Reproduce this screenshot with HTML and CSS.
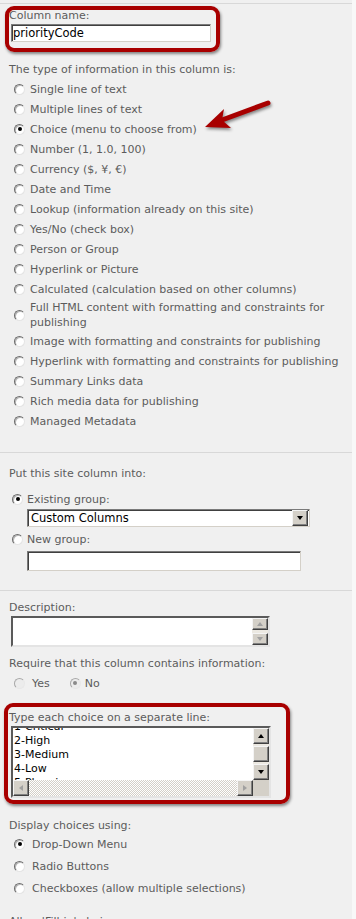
FILE: index.html
```html
<!DOCTYPE html>
<html lang="en">
<head>
    <meta charset="UTF-8">
    <meta name="viewport" content="width=device-width, initial-scale=1.0">
    <title>Create Column</title>
    <link rel="stylesheet" href="styles.css">
</head>
<body>
    <div class="page">
        <div class="section section-name">
            <div class="field callout callout-name">
                <div class="label">Column name:</div>
                <input type="text" class="textbox name-box" value="priorityCode">
            </div>
            <div class="label type-label">The type of information in this column is:</div>
            <div class="options">
                <div class="option"><span class="radio"></span><span class="text">Single line of text</span></div>
                <div class="option"><span class="radio"></span><span class="text">Multiple lines of text</span></div>
                <div class="option"><span class="radio checked"></span><span class="text">Choice (menu to choose from)</span></div>
                <div class="option"><span class="radio"></span><span class="text">Number (1, 1.0, 100)</span></div>
                <div class="option"><span class="radio"></span><span class="text">Currency ($, ¥, €)</span></div>
                <div class="option"><span class="radio"></span><span class="text">Date and Time</span></div>
                <div class="option"><span class="radio"></span><span class="text">Lookup (information already on this site)</span></div>
                <div class="option"><span class="radio"></span><span class="text">Yes/No (check box)</span></div>
                <div class="option"><span class="radio"></span><span class="text">Person or Group</span></div>
                <div class="option"><span class="radio"></span><span class="text">Hyperlink or Picture</span></div>
                <div class="option"><span class="radio"></span><span class="text">Calculated (calculation based on other columns)</span></div>
                <div class="option"><span class="radio"></span><span class="text">Full HTML content with formatting and constraints for publishing</span></div>
                <div class="option"><span class="radio"></span><span class="text">Image with formatting and constraints for publishing</span></div>
                <div class="option"><span class="radio"></span><span class="text">Hyperlink with formatting and constraints for publishing</span></div>
                <div class="option"><span class="radio"></span><span class="text">Summary Links data</span></div>
                <div class="option"><span class="radio"></span><span class="text">Rich media data for publishing</span></div>
                <div class="option"><span class="radio"></span><span class="text">Managed Metadata</span></div>
            </div>
        </div>

        <div class="section section-group">
            <div class="label">Put this site column into:</div>
            <div class="option group-option first"><span class="radio checked"></span><span class="text">Existing group:</span></div>
            <div class="select">
                <span class="select-value">Custom Columns</span>
                <span class="sb-btn select-btn"><span class="tri tri-down"></span></span>
            </div>
            <div class="option group-option"><span class="radio"></span><span class="text">New group:</span></div>
            <input type="text" class="textbox group-box" value="">
        </div>

        <div class="section section-more">
            <div class="label">Description:</div>
            <div class="memo desc-memo">
                <div class="memo-text"></div>
                <div class="vscroll">
                    <span class="sb-btn"><span class="tri tri-up dim"></span></span>
                    <span class="sb-track"></span>
                    <span class="sb-btn"><span class="tri tri-down dim"></span></span>
                </div>
            </div>

            <div class="label require-label">Require that this column contains information:</div>
            <div class="yes-no">
                <span class="radio disabled"></span><span class="text yes-text">Yes</span>
                <span class="radio disabled checked"></span><span class="text">No</span>
            </div>

            <div class="field callout callout-choices">
                <div class="label">Type each choice on a separate line:</div>
                <div class="memo choice-memo">
                    <div class="memo-main">
                        <div class="memo-text">
                            <div class="memo-lines">1-Critical<br>2-High<br>3-Medium<br>4-Low<br>5-Planning</div>
                        </div>
                        <div class="vscroll">
                            <span class="sb-btn"><span class="tri tri-up"></span></span>
                            <span class="sb-gap"></span>
                            <span class="sb-btn sb-thumb"></span>
                            <span class="sb-gap"></span>
                            <span class="sb-btn"><span class="tri tri-down"></span></span>
                        </div>
                    </div>
                    <div class="hscroll">
                        <span class="sb-btn"><span class="tri tri-left dim"></span></span>
                        <span class="sb-track"></span>
                        <span class="sb-btn"><span class="tri tri-right dim"></span></span>
                        <span class="sb-corner"></span>
                    </div>
                </div>
            </div>

            <div class="label display-label">Display choices using:</div>
            <div class="option display-option"><span class="radio checked"></span><span class="text">Drop-Down Menu</span></div>
            <div class="option display-option"><span class="radio"></span><span class="text">Radio Buttons</span></div>
            <div class="option display-option"><span class="radio"></span><span class="text">Checkboxes (allow multiple selections)</span></div>

            <div class="label fill-label">Allow 'Fill-in' choices:</div>
        </div>

        <!-- red pointer drawn over the Choice option -->
        <svg class="arrow" width="80" height="45" viewBox="0 0 80 45">
            <line x1="73" y1="8" x2="27" y2="25" stroke="#a80000" stroke-width="5" stroke-linecap="round"/>
            <polygon points="10,32 29,14 27,25 36,33" fill="#a80000"/>
        </svg>
    </div>
</body>
</html>
```

FILE: styles.css
```css
body {
    margin: 0;
    background: #f8f8f8;
    font-family: 'DejaVu Sans', Verdana, sans-serif;
    font-size: 11px;
    line-height: 15px;
    color: #5c5c5c;
}

.page {
    position: relative;
    width: 352px;
    height: 919px;
    box-sizing: border-box;
    padding-top: 3px;
    overflow: hidden;
    background: #f0f0f0;
}

.section {
    border-top: 1px solid #d8d8d8;
    padding-left: 9px;
}

.section-name {
    padding-top: 4px;
    padding-bottom: 21px;
}

.section-group {
    padding-top: 13px;
    padding-bottom: 19px;
}

.section-more {
    padding-top: 9px;
}

.label {
    white-space: nowrap;
}

.type-label {
    margin-top: 20px;
}

/* text boxes */
.textbox {
    display: block;
    box-sizing: border-box;
    height: 18px;
    margin: 1px 0 0 2px;
    padding: 0 1px;
    border: 1px solid;
    border-color: #7a7a7a #d4d0c8 #d4d0c8 #7a7a7a;
    box-shadow: inset 1px 1px 0 #404040;
    background: #fff;
    color: #000;
    font-family: 'DejaVu Sans', Verdana, sans-serif;
    font-size: 11.5px;
    outline: none;
}

.name-box {
    width: 200px;
}

.group-box {
    width: 274px;
    height: 20px;
    margin: 2px 0 0 18px;
}

/* radio options */
.options {
    margin-top: 2px;
}

.option {
    display: flex;
    align-items: center;
    min-height: 20px;
    padding-left: 5px;
    padding-right: 4px;
}

.option .text {
    padding: 1px 0;
    margin-left: 5px;
}

.radio {
    position: relative;
    flex: none;
    width: 11px;
    height: 11px;
    box-sizing: border-box;
    border-radius: 50%;
    border: 1px solid;
    border-color: #6c6c6c #e4e4e4 #e4e4e4 #6c6c6c;
    box-shadow: inset 1px 1px 0 #b8b8b8;
    background: #fff;
}

.radio.checked::after {
    content: '';
    position: absolute;
    left: 2.5px;
    top: 2.5px;
    width: 4px;
    height: 4px;
    border-radius: 50%;
    background: #000;
}

.radio.disabled {
    background: #ececec;
    border-color: #a8a8a8 #e8e8e8 #e8e8e8 #a8a8a8;
    box-shadow: none;
}

.radio.disabled.checked::after {
    background: #8a8a8a;
}

.group-option {
    padding-left: 3px;
    margin-top: 2px;
}

.group-option.first {
    margin-top: 8px;
}

.group-option .text {
    margin-left: 4px;
}

/* drop-down */
.select {
    display: flex;
    align-items: center;
    width: 283px;
    height: 18px;
    box-sizing: border-box;
    margin-left: 18px;
    padding: 1px 1px 1px 3px;
    border: 1px solid;
    border-color: #7a7a7a #d4d0c8 #d4d0c8 #7a7a7a;
    box-shadow: inset 1px 1px 0 #404040;
    background: #fff;
    color: #000;
    font-size: 11.5px;
}

.select-value {
    flex: 1;
}

.select-btn {
    width: 15px;
    height: 14px;
}

/* scrollbar parts */
.sb-btn {
    display: flex;
    align-items: center;
    justify-content: center;
    flex: none;
    box-sizing: border-box;
    width: 16px;
    height: 16px;
    background: #d4d0c8;
    border: 1px solid;
    border-color: #f4f4f4 #404040 #404040 #f4f4f4;
    box-shadow: inset -1px -1px 0 #808080;
}

.sb-track {
    flex: 1;
    background: repeating-conic-gradient(#fff 0 25%, #d4d0c8 0 50%) 0 0 / 2px 2px;
}

.sb-gap {
    height: 2px;
    background: #ece9e2;
}

.sb-corner {
    width: 16px;
    background: #d4d0c8;
}

.tri {
    width: 0;
    height: 0;
}

.tri-down {
    border-left: 3.5px solid transparent;
    border-right: 3.5px solid transparent;
    border-top: 4px solid #000;
}

.tri-up {
    border-left: 3.5px solid transparent;
    border-right: 3.5px solid transparent;
    border-bottom: 4px solid #000;
}

.tri-left {
    border-top: 3.5px solid transparent;
    border-bottom: 3.5px solid transparent;
    border-right: 4px solid #000;
}

.tri-right {
    border-top: 3.5px solid transparent;
    border-bottom: 3.5px solid transparent;
    border-left: 4px solid #000;
}

.tri-up.dim {
    border-bottom-color: #a0a0a0;
}

.tri-down.dim {
    border-top-color: #a0a0a0;
}

.tri-left.dim {
    border-right-color: #a0a0a0;
}

.tri-right.dim {
    border-left-color: #a0a0a0;
}

/* multi-line boxes */
.memo {
    box-sizing: border-box;
    margin: 1px 0 0 2px;
    border: 2px solid;
    border-color: #5a5a5a #e4e4e4 #e4e4e4 #5a5a5a;
    background: #fff;
    color: #000;
}

.desc-memo {
    display: flex;
    width: 259px;
    height: 31px;
}

.memo-text {
    flex: 1;
    overflow: hidden;
}

.vscroll {
    display: flex;
    flex-direction: column;
    width: 16px;
}

.desc-memo .sb-btn {
    height: 12px;
}

.desc-memo .sb-track {
    background: #ece9e2;
}

.choice-memo {
    display: flex;
    flex-direction: column;
    width: 260px;
    height: 72px;
}

.memo-main {
    display: flex;
    flex: 1;
    min-height: 0;
}

.memo-lines {
    margin-top: -8px;
    padding-left: 1px;
    font-size: 11px;
    line-height: 14px;
}

.hscroll {
    display: flex;
    height: 16px;
}

.hscroll .sb-btn {
    height: 16px;
}

.require-label {
    margin-top: 9px;
}

.yes-no {
    display: flex;
    align-items: center;
    height: 20px;
    margin-top: 2px;
    padding-left: 5px;
}

.yes-no .text {
    margin-left: 7px;
}

.yes-no .yes-text {
    margin-right: 20px;
}

.yes-no .yes-text + .radio + .text {
    margin-left: 4px;
}

/* red callouts */
.callout {
    position: relative;
}

.callout::after {
    content: '';
    position: absolute;
    border: 4px solid #a80000;
    border-radius: 9px;
    box-shadow: 1px 2px 3px rgba(0, 0, 0, 0.45);
    pointer-events: none;
}

.callout-name::after {
    left: -4px;
    top: -2px;
    width: 207px;
    height: 38px;
}

.callout-choices {
    margin-top: 17px;
}

.callout-choices::after {
    left: -5px;
    top: -7px;
    width: 278px;
    height: 93px;
}

.display-label {
    margin-top: 20px;
}

.display-option {
    min-height: 22px;
}

.display-option:first-of-type {
    margin-top: 1px;
}

.display-option .text {
    margin-left: 7px;
}

.fill-label {
    margin-top: 15px;
}

.arrow {
    position: absolute;
    left: 195px;
    top: 95px;
    filter: drop-shadow(1px 2px 1.5px rgba(0, 0, 0, 0.45));
}
```
